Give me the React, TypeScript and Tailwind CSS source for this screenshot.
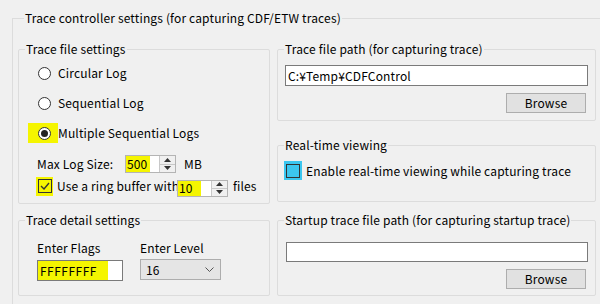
import React from 'react';

const font = { fontFamily: '"Noto Sans CJK JP", "Noto Sans", sans-serif' };

const Group: React.FC<{ title: string; className?: string; children?: React.ReactNode }> = ({ title, className = '', children }) => (
  <fieldset className={`border border-[#dcdcdc] rounded-[2px] ${className}`}>
    <legend className="ml-[6px] px-[1px] leading-[16px] h-[16px] whitespace-nowrap">{title}</legend>
    {children}
  </fieldset>
);

const Radio: React.FC<{ checked?: boolean }> = ({ checked }) => (
  <span className="w-[13px] h-[13px] rounded-full border border-[#333] bg-white flex items-center justify-center">
    {checked && <span className="w-[7px] h-[7px] rounded-full bg-[#222]" />}
  </span>
);

const SpinArrows: React.FC = () => (
  <span className="w-[16px] h-full border-l border-[#c8c8c8] bg-[#f0f0f0] flex flex-col">
    <span className="flex-1 flex items-center justify-center border-b border-[#c8c8c8]">
      <svg width="7" height="4" viewBox="0 0 7 4"><path d="M0 4 L3.5 0 L7 4 Z" fill="#333" /></svg>
    </span>
    <span className="flex-1 flex items-center justify-center">
      <svg width="7" height="4" viewBox="0 0 7 4"><path d="M0 0 L3.5 4 L7 0 Z" fill="#333" /></svg>
    </span>
  </span>
);

const Spin: React.FC<{ value: string; hl: string; className?: string }> = ({ value, hl, className = '' }) => (
  <span className={`relative flex border border-[#b4b4b4] bg-white ${className}`}>
    <span className={`bg-[#f5f500] h-full flex items-center pl-[1px] ${hl}`}>{value}</span>
    <span className="flex-1" />
    <SpinArrows />
  </span>
);

const Button: React.FC<{ label: string }> = ({ label }) => (
  <button className="w-[80px] h-[20px] border border-[#adadad] bg-[#e1e1e1] leading-[18px] text-center">{label}</button>
);

export default function App() {
  return (
    <div style={font} className="w-[600px] h-[304px] overflow-hidden bg-[#f0f0f0] text-[12px] tracking-[0.15px] text-black pt-[10px] pl-[12px]">
      <fieldset className="border border-[#dcdcdc] w-[620px] pl-[5px] pb-[20px]">
        <legend className="ml-[6px] px-[1px] leading-[16px] h-[16px] whitespace-nowrap">
          Trace controller settings (for capturing CDF/ETW traces)
        </legend>
        <div className="flex gap-[7px] mt-[15px]">
          {/* left column */}
          <div className="w-[252px] flex flex-col">
            <Group title="Trace file settings" className="h-[163px]">
              <div className="mt-[1px] pl-[9px]">
                {['Circular Log', 'Sequential Log', 'Multiple Sequential Logs'].map((t, i) => (
                  <div key={t} className="h-[30px] flex items-center">
                    <span className={`w-[30px] h-[20px] flex items-center pl-[10px] ${i === 2 ? 'bg-[#f5f500]' : ''}`}>
                      <Radio checked={i === 2} />
                    </span>
                    <span>{t}</span>
                  </div>
                ))}
              </div>
              <div className="mt-[7px] pl-[18px] h-[18px] flex items-center">
                <span className="w-[88px]">Max Log Size:</span>
                <Spin value="500" hl="w-[24px]" className="w-[51px] h-[18px]" />
                <span className="ml-[8px]">MB</span>
              </div>
              <div className="mt-[3px] pl-[17px] h-[20px] flex items-center">
                <span className="w-[17px] h-[19px] bg-[#f5f500] flex items-center justify-center">
                  <span className="w-[14px] h-[14px] border border-[#333] flex items-center justify-center">
                    <svg width="10" height="8" viewBox="0 0 10 8"><path d="M1 4 L4 7 L9 1" stroke="#333" strokeWidth="1.4" fill="none" /></svg>
                  </span>
                </span>
                <span className="ml-[4px] w-[120px] whitespace-nowrap overflow-visible">Use a ring buffer with</span>
                <Spin value="10" hl="w-[23px]" className="w-[51px] h-[17px] mt-[4px]" />
                <span className="ml-[5px]">files</span>
              </div>
            </Group>
            <Group title="Trace detail settings" className="h-[84px] mt-[8px]">
              <div className="grid grid-cols-[103px_1fr] pl-[18px] mt-[12px]">
                <span className="leading-[16px]">Enter Flags</span>
                <span className="leading-[16px]">Enter Level</span>
                <span className="mt-[4px] w-[86px] h-[21px] border border-[#7a7a7a] bg-white flex">
                  <span className="w-[70px] bg-[#f5f500] flex items-center pl-[2px] tracking-[0.5px]">FFFFFFFF</span>
                </span>
                <span className="mt-[3px] w-[81px] h-[21px] border border-[#adadad] bg-[#e5e5e5] flex items-center justify-between pl-[5px] pr-[6px]">
                  <span>16</span>
                  <svg width="9" height="5" viewBox="0 0 9 5"><path d="M0.5 0.5 L4.5 4.5 L8.5 0.5" stroke="#555" fill="none" /></svg>
                </span>
              </div>
            </Group>
            <Group title="Trace Buffer settings" className="h-[40px] mt-[5px]" />
          </div>
          {/* right column */}
          <div className="w-[319px] flex flex-col">
            <Group title="Trace file path (for capturing trace)" className="h-[80px]">
              <div className="ml-[7px] mt-[8px] w-[303px] h-[21px] border border-[#7a7a7a] bg-white flex items-center pl-[2px]">
                C:¥Temp¥CDFControl
              </div>
              <div className="flex justify-end pr-[9px] mt-[7px]">
                <Button label="Browse" />
              </div>
            </Group>
            <Group title="Real-time viewing" className="h-[65px] mt-[16px]">
              <div className="ml-[6px] mt-[8px] flex items-center">
                <span className="w-[18px] h-[19px] bg-[#3cc6ef] flex items-center justify-center">
                  <span className="w-[14px] h-[14px] border border-[#333]" />
                </span>
                <span className="ml-[4px]">Enable real-time viewing while capturing trace</span>
              </div>
            </Group>
            <Group title="Startup trace file path (for capturing startup trace)" className="h-[84px] mt-[10px]">
              <div className="ml-[8px] mt-[14px] w-[302px] h-[20px] border border-[#7a7a7a] bg-white" />
              <div className="flex justify-end pr-[9px] mt-[7px]">
                <Button label="Browse" />
              </div>
            </Group>
          </div>
        </div>
      </fieldset>
    </div>
  );
}
